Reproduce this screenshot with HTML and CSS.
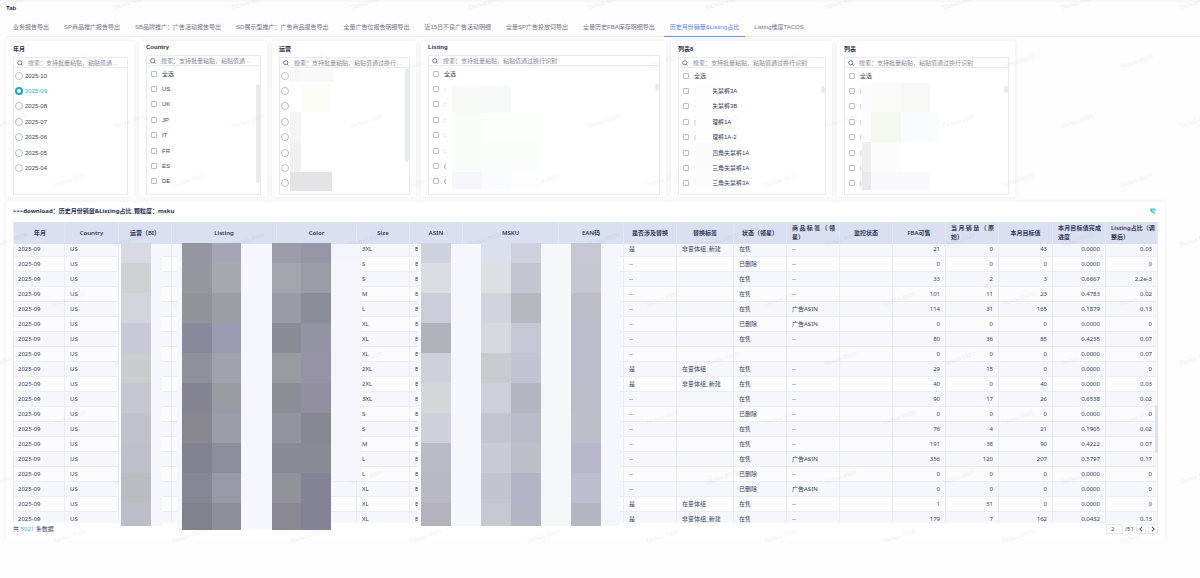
FILE: index.html
```html
<!DOCTYPE html>
<html lang="zh-CN">
<head>
<meta charset="utf-8">
<title>Tab</title>
<link rel="stylesheet" href="styles.css">
</head>
<body>
<svg class="defs" aria-hidden="true">
  <symbol id="search" viewBox="0 0 12 12"><circle cx="5.5" cy="5.5" r="4.2" fill="none" stroke="currentColor" stroke-width="1.5"/><path d="M8.7 8.7 11 11" stroke="currentColor" stroke-width="1.7"/></symbol>
</svg>
<main class="page">
  <h1 class="page-title">Tab</h1>
  <nav class="tabs">
    <a href="#t1">业务报告导出</a>
    <a href="#t2">SP商品推广报告导出</a>
    <a href="#t3">SB品牌推广：广告活动报告导出</a>
    <a href="#t4">SD展示型推广：广告商品报告导出</a>
    <a href="#t5">全量广告位报告明细导出</a>
    <a href="#t6">近15日不良广告活动明细</a>
    <a href="#t7">全量SP广告投放词导出</a>
    <a href="#t8">全量历史FBA库存明细导出</a>
    <a href="#t9" class="active" aria-current="page">历史月份销量&amp;Listing占比</a>
    <a href="#t10">Listing维度TACOS</a>
  </nav>

  <section class="filters">
    <div class="card">
      <h2>年月</h2>
      <label class="search"><svg><use href="#search"/></svg><input type="text" aria-label="搜索年月" placeholder="搜索：支持批量粘贴，粘贴值通过换行识别"></label>
      <div class="list radios">
        <label><input type="radio" name="month">2025-10</label>
        <label><input type="radio" name="month" checked>2025-09</label>
        <label><input type="radio" name="month">2025-08</label>
        <label><input type="radio" name="month">2025-07</label>
        <label><input type="radio" name="month">2025-06</label>
        <label><input type="radio" name="month">2025-05</label>
        <label><input type="radio" name="month">2025-04</label>
      </div>
    </div>

    <div class="card raised">
      <h2>Country</h2>
      <label class="search"><svg><use href="#search"/></svg><input type="text" aria-label="搜索Country" placeholder="搜索：支持批量粘贴，粘贴值通过换行识别"></label>
      <div class="list">
        <label><input type="checkbox">全选</label>
        <label><input type="checkbox">US</label>
        <label><input type="checkbox">UK</label>
        <label><input type="checkbox">JP</label>
        <label><input type="checkbox">IT</label>
        <label><input type="checkbox">FR</label>
        <label><input type="checkbox">ES</label>
        <label><input type="checkbox">DE</label>
        <span class="thumb long"></span>
      </div>
    </div>

    <div class="card">
      <h2>运营</h2>
      <label class="search"><svg><use href="#search"/></svg><input type="text" aria-label="搜索运营" placeholder="搜索：支持批量粘贴，粘贴值通过换行识别"></label>
      <div class="list radios">
        <label><input type="radio" name="op" aria-label="运营 1"></label>
        <label><input type="radio" name="op" aria-label="运营 2"></label>
        <label><input type="radio" name="op" aria-label="运营 3"></label>
        <label><input type="radio" name="op" aria-label="运营 4"></label>
        <label><input type="radio" name="op" aria-label="运营 5"></label>
        <label><input type="radio" name="op" aria-label="运营 6"></label>
        <label><input type="radio" name="op" aria-label="运营 7"></label>
        <label><input type="radio" name="op" aria-label="运营 8"></label>
        <span class="thumb top"></span>
        <svg class="mask" width="131" height="127" viewBox="280 68 131 127" shape-rendering="crispEdges" aria-hidden="true">
          <path fill="#f8f8f3" d="M290 69h11v13h-11z"/><path fill="#f8f8f8" d="M301 69h33v13h-33z"/>
          <path fill="#fdfdf8" d="M301 84h30v28h-30z"/><path fill="#f4f4f5" d="M290 112h11v31h-11z"/>
          <path fill="#f0f0f2" d="M290 143h11v29h-11z"/><path fill="#e4e4e8" d="M290 172h42v19h-42z"/>
        </svg>
      </div>
    </div>

    <div class="card raised">
      <h2>Listing</h2>
      <label class="search"><svg><use href="#search"/></svg><input type="text" aria-label="搜索Listing" placeholder="搜索：支持批量粘贴，粘贴值通过换行识别"></label>
      <div class="list">
        <label><input type="checkbox">全选</label>
        <label><input type="checkbox">·</label>
        <label><input type="checkbox">:</label>
        <label><input type="checkbox">:</label>
        <label><input type="checkbox">:</label>
        <label><input type="checkbox">:</label>
        <label><input type="checkbox">(</label>
        <label><input type="checkbox">(</label>
        <span class="thumb short"></span>
        <svg class="mask" width="231" height="130" viewBox="429 66 231 130" shape-rendering="crispEdges" aria-hidden="true">
          <path fill="#fff" d="M447 83h5v107h-5z"/>
          <path fill="#f8faf7" d="M452 85h30v28h-30z"/><path fill="#f8faf9" d="M482 85h29v28h-29z"/>
          <path fill="#f8fdf7" d="M452 113h30v29h-30z"/><path fill="#fbfefa" d="M482 113h29v29h-29z"/>
          <path fill="#fcfefc" d="M511 113h30v29h-30z"/><path fill="#f9fcf8" d="M452 142h30v30h-30z"/>
          <path fill="#fbfdfa" d="M482 142h59v30h-59z"/><path fill="#f5f6fa" d="M452 172h30v17h-30z"/>
          <path fill="#fafbff" d="M482 172h29v17h-29z"/><path fill="#fdfdff" d="M511 172h30v17h-30z"/>
        </svg>
      </div>
    </div>

    <div class="card">
      <h2>列表8</h2>
      <label class="search"><svg><use href="#search"/></svg><input type="text" aria-label="搜索列表8" placeholder="搜索：支持批量粘贴，粘贴值通过换行识别"></label>
      <div class="list">
        <label><input type="checkbox">全选</label>
        <label><input type="checkbox"><i>:</i>失禁裤3A</label>
        <label><input type="checkbox"><i>:</i>失禁裤3B</label>
        <label><input type="checkbox"><i>(</i>理裤1A</label>
        <label><input type="checkbox"><i>(</i>理裤1A-2</label>
        <label><input type="checkbox"><i>‘</i>四角失禁裤1A</label>
        <label><input type="checkbox"><i>‘</i>三角失禁裤1A</label>
        <label><input type="checkbox"><i>‘</i>三角失禁裤3A</label>
        <span class="thumb short"></span>
        <svg class="mask" width="148" height="127" viewBox="679 68 148 127" shape-rendering="crispEdges" aria-hidden="true">
          <path fill="#fefdfc" d="M696 84h17v28h-17z"/><path fill="#fdfefd" d="M696 112h17v31h-17z"/>
          <path fill="#fbfbfb" d="M696 143h17v29h-17z"/><path fill="#fcfcff" d="M696 172h17v18h-17z"/>
        </svg>
      </div>
    </div>

    <div class="card">
      <h2>列表</h2>
      <label class="search"><svg><use href="#search"/></svg><input type="text" aria-label="搜索列表" placeholder="搜索：支持批量粘贴，粘贴值通过换行识别"></label>
      <div class="list">
        <label><input type="checkbox">全选</label>
        <label><input type="checkbox"><i>|</i></label>
        <label><input type="checkbox"><i>|</i></label>
        <label><input type="checkbox"><i>|</i></label>
        <label><input type="checkbox"><i>|</i></label>
        <label><input type="checkbox"><i>|</i></label>
        <label><input type="checkbox"><i>|</i></label>
        <label><input type="checkbox"><i>|</i></label>
        <span class="thumb short"></span>
        <svg class="mask" width="165" height="127" viewBox="845 68 165 127" shape-rendering="crispEdges" aria-hidden="true">
          <path fill="#fcfcff" d="M862 83h9v59h-9z"/><path fill="#fafaf8" d="M871 83h30v29h-30z"/>
          <path fill="#f8f8f6" d="M901 83h29v29h-29z"/><path fill="#f5f8ee" d="M871 112h30v30h-30z"/>
          <path fill="#f9fbff" d="M901 112h30v30h-30z"/><path fill="#fbfcfc" d="M931 112h9v30h-9z"/>
          <path fill="#efeff0" d="M862 142h9v30h-9z"/><path fill="#e9e9eb" d="M862 172h9v18h-9z"/>
          <path fill="#fcfcfc" d="M871 142h30v30h-30z"/><path fill="#f8f8fe" d="M871 172h59v18h-59z"/>
        </svg>
      </div>
    </div>
  </section>

  <section class="report">
    <header class="report-head">
      <h2>&gt;&gt;&gt;download：历史月份销量&amp;Listing占比_颗粒度：msku</h2>
      <button type="button" class="swap" aria-label="切换"><svg viewBox="0 0 12 12" fill="none" stroke="currentColor" stroke-width="1.8"><path d="M1 2h5v8h5M1 5h3M1 2l2 6h3M6 2h4v5"/></svg></button>
    </header>
    <div class="table-wrap">
      <table>
        <colgroup>
          <col class="c52"><col class="c54"><col class="c53"><col class="c105"><col class="c80"><col class="c53"><col class="c53"><col class="c96"><col class="c65"><col class="c53"><col class="c57"><col class="c53"><col class="c53"><col class="c53"><col class="c53"><col class="c53"><col class="c54"><col class="c53"><col class="c52">
        </colgroup>
        <thead>
          <tr><th>年月</th><th>Country</th><th>运营（BI）</th><th>Listing</th><th>Color</th><th>Size</th><th>ASIN</th><th>MSKU</th><th>EAN码</th><th>是否涉及替换</th><th>替换标签</th><th>状态（领星）</th><th class="two">商品标签（领星）</th><th>监控状态</th><th>FBA可售</th><th class="two">当月销量（原始）</th><th>本月目标值</th><th class="two">本月目标值完成进度</th><th class="two">Listing占比（调整后）</th></tr>
        </thead>
        <tbody id="rows"></tbody>
      </table>
      <svg class="mask wide" id="mosaic" viewBox="13 222 1145 308" preserveAspectRatio="none" shape-rendering="crispEdges" aria-hidden="true"></svg>
      <span class="thumb grid-thumb"></span>
    </div>
    <footer class="report-foot">
      <span>共 <b>5021</b> 条数据</span>
      <div class="pager">
        <input type="text" value="2" aria-label="页码"><span>/51</span>
        <button type="button" aria-label="上一页"><svg viewBox="0 0 8 8"><path d="M5.5 1 2.5 4l3 3"/></svg></button>
        <button type="button" aria-label="下一页"><svg viewBox="0 0 8 8"><path d="M2.5 1l3 3-3 3"/></svg></button>
      </div>
    </footer>
  </section>
</main>
<svg class="watermark" aria-hidden="true">
  <defs>
    <pattern id="wm" width="118.5" height="118.6" patternUnits="userSpaceOnUse">
      <text transform="translate(54 69) rotate(-18)">Tiichoo 8920</text>
      <text transform="translate(-5 10) rotate(-18)">Tiichoo 8920</text>
      <text transform="translate(113.5 10) rotate(-18)">Tiichoo 8920</text>
      <text transform="translate(-5 128.6) rotate(-18)">Tiichoo 8920</text>
    </pattern>
  </defs>
  <rect width="100%" height="100%" fill="url(#wm)"/>
</svg>
<script src="app.js"></script>
</body>
</html>
```

FILE: styles.css
```css
* { box-sizing: border-box; }

body {
  margin: 0;
  background: #fdfdfd;
  color: #363f5e;
  font: 6px/8px "Liberation Sans", "Noto Sans CJK SC", sans-serif;
}

h1, h2 { margin: 0; font-size: 6px; line-height: 8px; font-weight: 700; color: #28304e; }
a { color: inherit; text-decoration: none; }
input, button { font: inherit; color: inherit; margin: 0; padding: 0; }
.defs { position: absolute; width: 0; height: 0; }

.page { border-top: 2px solid #f7f7f7; padding: 2px 0 0 6px; }

.tabs {
  display: flex;
  gap: 15px;
  padding: 9px 7px 0;
  border-bottom: 1px solid #eeeff1;
  color: #70758a;
  white-space: nowrap;
}
.tabs a { padding: 2px 0 5px; }
.tabs .active {
  color: #5b7df0;
  margin: 0 -6px -1px;
  padding: 2px 6px 5px;
  border-bottom: 1px solid #6f8ff5;
}

.filters {
  display: grid;
  grid-template-columns: 128fr 128fr 144fr 245fr 161fr 178fr 180fr;
  gap: 5px;
  margin-top: 4px;
}
.card {
  display: flex;
  flex-direction: column;
  min-width: 0;
  height: 156px;
  padding: 4px 6px 2px 7px;
  background: #fff;
  border-radius: 2px;
  box-shadow: 0 0 5px rgba(0, 0, 0, .07);
}
.card.raised { padding-top: 2px; }
.search {
  display: flex;
  align-items: center;
  gap: 5px;
  height: 11px;
  margin-top: 4px;
  padding: 0 6px 0 3px;
  border: 1px solid #e9ebf3;
}
.search svg { flex: none; width: 6px; height: 6px; color: #4c546e; }
.search input {
  flex: 1;
  min-width: 0;
  height: 8px;
  border: 0;
  background: none;
  outline: 0;
  text-overflow: ellipsis;
}
.search input::placeholder { color: #858a9b; opacity: 1; }

.list {
  position: relative;
  flex: 1;
  display: grid;
  grid-template-rows: repeat(8, 1fr);
  padding: 0 0 3px 4px;
  border: 1px solid #e9ebf3;
  border-top: 0;
}
.raised .list { padding-bottom: 5px; }
.list label { display: flex; align-items: center; gap: 5px; color: #363f5e; }
.list i { width: 18px; margin-right: -5px; font-style: normal; color: #c09070; }
.list input { appearance: none; flex: none; width: 6px; height: 6px; border: 1px solid #b9bdc9; border-radius: 1px; background: #fff; }
.list.radios { padding-left: 1px; }
.radios label { gap: 2px; }
.radios input { width: 8px; height: 8px; border-radius: 50%; }
.radios input:checked { border: 2px solid #14a9b8; }
.radios label:has(:checked) { color: #2db1bf; }

.thumb { position: absolute; right: 0; width: 4px; border-radius: 2px; background: #e9eaed; }
.thumb.long { top: 18px; height: 99px; }
.thumb.top { top: 0; height: 94px; }
.thumb.short { top: 18px; height: 7px; }
.mask { position: absolute; left: 0; top: 0; z-index: 2; pointer-events: none; }

.report {
  margin: 5px 35px 0 0;
  padding: 5px 7px 3px;
  background: #fff;
  border-radius: 2px;
  box-shadow: 0 0 5px rgba(0, 0, 0, .07);
  font-family: "Noto Sans", "Noto Sans CJK SC", sans-serif;
}
.report-head { display: flex; justify-content: space-between; align-items: center; height: 8px; }
.swap { width: 6px; height: 6px; margin-right: 2px; border: 0; background: none; color: #2bb3c0; display: flex; }
.swap svg { width: 6px; height: 6px; }

.table-wrap { position: relative; margin-top: 7px; }
table { width: 100%; table-layout: fixed; border-collapse: separate; border-spacing: 0; }
.c52 { width: 52px; } .c53 { width: 53px; } .c54 { width: 54px; } .c57 { width: 57px; }
.c65 { width: 65px; } .c80 { width: 80px; } .c96 { width: 96px; } .c105 { width: 105px; }
th {
  height: 22px;
  padding: 0 2px;
  background: #dadff2;
  border-right: 1px solid #e3e7f6;
  color: #303958;
  font-weight: 600;
  line-height: 9px;
  white-space: nowrap;
}
th.two { padding: 0 4px 0 5px; text-align: justify; white-space: normal; }
th.two:last-child { padding: 0 0 0 5px; text-align: left; }
td {
  height: 15px;
  padding: 0 5px;
  border-right: 1px solid #eaecf6;
  border-bottom: 1px solid #eaecf6;
  background: #fcfcff;
  white-space: nowrap;
  overflow: hidden;
}
td:first-child, th:first-child { border-left: 1px solid #eaecf6; padding-left: 4px; }
tr:nth-child(odd) td { background: #f5f7fc; }
tbody tr:first-child td { height: 13px; padding-bottom: 2px; }
tbody tr:last-child td { height: 11px; padding-top: 2px; border-bottom: 0; }
td.num { text-align: right; padding-right: 5px; }
.mask.wide { width: 100%; height: 308px; }
.grid-thumb { top: 183px; height: 48px; width: 3px; background: #dfe1ec; }

.report-foot { display: flex; justify-content: space-between; align-items: center; height: 12px; }
.report-foot b { font-weight: 400; color: #2bb3c0; }
.pager { display: flex; align-items: center; gap: 2px; }
.pager input { width: 17px; height: 10px; padding-left: 4px; border: 1px solid #e6e8f0; background: #fff; }
.pager button { display: flex; align-items: center; justify-content: center; width: 10px; height: 10px; border: 1px solid #e6e8f0; border-radius: 1px; background: #fff; }
.pager svg { width: 6px; height: 6px; fill: none; stroke: #3b4460; stroke-width: 1.4; }

.watermark { position: absolute; inset: 0; width: 100%; height: 100%; z-index: 1; pointer-events: none; }
.watermark text { font-size: 6px; fill: #000; fill-opacity: .07; }
```

FILE: app.js
```js
// size, replace flag, group, status, tag, then the numeric columns
const rows = [
  ["3XL", "是", "非变体组_新建", "在售", "--", 21, 0, 43, "0.0000", "0.03"],
  ["S", "--", "", "已删除", "--", 0, 0, 0, "0.0000", "0"],
  ["S", "--", "", "在售", "--", 33, 2, 3, "0.6667", "2.2e-3"],
  ["M", "--", "", "在售", "--", 101, 11, 23, "0.4783", "0.02"],
  ["L", "--", "", "在售", "广告ASIN", 114, 31, 165, "0.1879", "0.13"],
  ["XL", "--", "", "已删除", "广告ASIN", 0, 0, 0, "0.0000", "0"],
  ["XL", "--", "", "在售", "--", 80, 36, 85, "0.4235", "0.07"],
  ["XL", "--", "", "", "", 0, 0, 0, "0.0000", "0.07"],
  ["2XL", "是", "在变体组", "在售", "--", 29, 15, 0, "0.0000", "0"],
  ["2XL", "是", "非变体组_新建", "在售", "--", 40, 0, 40, "0.0000", "0.03"],
  ["3XL", "--", "", "在售", "--", 90, 17, 26, "0.6538", "0.02"],
  ["S", "--", "", "已删除", "--", 0, 0, 0, "0.0000", "0"],
  ["S", "--", "", "在售", "--", 76, 4, 21, "0.1905", "0.02"],
  ["M", "--", "", "在售", "--", 191, 38, 90, "0.4222", "0.07"],
  ["L", "--", "", "在售", "广告ASIN", 356, 120, 207, "0.5797", "0.17"],
  ["L", "--", "", "已删除", "--", 0, 0, 0, "0.0000", "0"],
  ["XL", "--", "", "已删除", "广告ASIN", 0, 0, 0, "0.0000", "0"],
  ["XL", "是", "在变体组", "在售", "--", 1, 51, 0, "0.0000", "0"],
  ["XL", "是", "非变体组_新建", "在售", "--", 179, 7, 162, "0.0432", "0.13"],
];
const cell = (v, num) => `<td${num ? ' class="num"' : ""}>${v}</td>`;
document.getElementById("rows").innerHTML = rows.map(([size, flag, group, state, tag, ...nums]) =>
  "<tr>" + ["2025-09", "US", "", "", "", size, "B", "", "", flag, group, state, tag, ""].map(v => cell(v)).join("") +
  nums.map(v => cell(v, true)).join("") + "</tr>").join("");

// Mosaic that hides the private columns: [x, width, bottom, colours from top to bottom]
const columns = [
  [121, 30, 526, "d7d9e5 cfd0d3 d3d4dc c8c8d8 cbccd0 c5c6cf c1c1cc bebfca bbbcc1 bcbdc8"],
  [182, 30, 530, "9496a2 96969e 93939a 89889c 908f9c 858492 88878f 838293 878695 81818c"],
  [212, 29, 530, "a4a6b5 a8a8b0 9d9da5 9d9bb3 a2a1ae 9b9ba4 9d9da9 8e8d9d 9999a8 8f8f9b"],
  [272, 29, 530, "9b9da9 a4a4ac 9a9ba4 8c8c96 999aa2 8c8d95 93949d 8a8a94 91929a 8a8892"],
  [301, 30, 530, "9597a6 9c9ca6 8b8d98 9493a4 9593a5 918fa0 888892 8a8a94 848395 848395"],
  [421, 30, 526, "ced2de dcdce3 cacdd9 b2b2bb d0d0da d5d6da d0d0dd b9bac6 b8b9c2 b4b2bd"],
  [481, 30, 526, "dce0ec dedfe3 d2d3dd d7d8e0 cacbcf cecfd9 c4c5ce caccd5 c4c4ce c8c8d3"],
  [511, 30, 526, "d0d1de c4c5d0 b6b7bf c6c6d5 c3c3d2 b5b5c2 bbbcc9 bebec9 b4b4c6 b5b5c3"],
  [571, 30, 526, "c6c7d4 c6c6d0 bdbdc8 bdbccd bdbccd bdbdc9 bebec9 b7b6ca bdbdd0 b6b6c3"],
];
// Pale blocks between the dark ones: [x, y, width, bottom, colour]
const pale = [
  [119, 244, 2, 526, "f9faff"], [151, 244, 11, 526, "f5f6ff"], [177, 244, 5, 530, "f6f7fd"],
  [241, 244, 31, 530, "f5f6fe"], [331, 244, 30, 262, "f2f5ff"], [331, 262, 30, 481, "f6f5fc"],
  [418, 244, 3, 526, "f9faff"], [451, 244, 30, 526, "f6f7fd"], [541, 244, 30, 526, "f5f7fb"],
  [601, 244, 19, 526, "f5f6fd"],
];
const rect = (x, y, w, bottom, fill) => `<rect x="${x}" y="${y}" width="${w}" height="${bottom - y}" fill="#${fill}"/>`;
const edges = [243, 263, 293, 323, 353, 383, 413, 443, 473, 503];
document.getElementById("mosaic").innerHTML =
  pale.map(p => rect(...p)).join("") +
  columns.map(([x, w, bottom, colours]) => colours.split(" ")
    .map((c, i) => rect(x, edges[i], w, edges[i + 1] || bottom, c)).join("")).join("");
```
